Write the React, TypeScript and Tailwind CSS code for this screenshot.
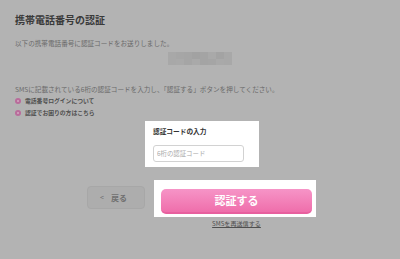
import React from 'react';

/**
 * Phone-number verification step, shown under a tutorial overlay:
 * the page is dimmed and only the code input and the submit button are lit.
 */
const MOSAIC = [
  ['#a8a8a8', '#a8a8a8'],
  ['#a6a6a6', '#a9a9a9'],
  ['#a5a5a5', '#a5a5a5'],
  ['#a2a2a2', '#a9a9a9'],
  ['#a4a4a4', '#a4a4a4'],
  ['#a9a9a9', '#a5a5a5'],
  ['#a3a3a3', '#a9a9a9'],
  ['#a8a8a8', '#a8a8a8'],
];

const HELP_LINKS = ['電話番号ログインについて', '認証でお困りの方はこちら'];

function Bullet() {
  return (
    <span className="w-[6px] h-[6px] rounded-full bg-[#b96c9b] flex items-center justify-center flex-shrink-0">
      <span className="w-[2px] h-[2px] rounded-full bg-[#d3a9c2]" />
    </span>
  );
}

export default function App() {
  return (
    <div
      className="w-[400px] h-[259px] bg-[#b3b3b3] overflow-hidden px-[15px] flex flex-col"
      style={{ fontFamily: '"Noto Sans CJK JP", "Noto Sans", sans-serif' }}
    >
      <h1 className="text-[10px] leading-[14px] font-bold text-[#3a3a3a] mt-[13px]">携帯電話番号の認証</h1>
      <p className="text-[6.6px] leading-[10px] text-[#6a6a6a] mt-[11px]">以下の携帯電話番号に認証コードをお送りしました。</p>

      {/* masked phone number */}
      <div className="flex justify-center mt-[4px]">
        <div className="flex">
          {MOSAIC.map(([top, bottom], i) => (
            <div key={i} className="w-[8px] flex flex-col">
              <div className="h-[7px]" style={{ background: top }} />
              <div className="h-[6px]" style={{ background: bottom }} />
            </div>
          ))}
        </div>
      </div>

      <p className="text-[6.6px] leading-[10px] text-[#6a6a6a] mt-[19px]">
        SMSに記載されている6桁の認証コードを入力し、「認証する」ボタンを押してください。
      </p>
      <ul className="mt-[2px] flex flex-col gap-[2px]">
        {HELP_LINKS.map((label) => (
          <li key={label} className="flex items-center gap-[4px] h-[10px]">
            <Bullet />
            <span className="text-[5.8px] font-bold text-[#4f4f4f]">{label}</span>
          </li>
        ))}
      </ul>

      {/* highlighted: code input */}
      <div className="ml-[130px] w-[114px] h-[46px] bg-white mt-[3px] px-[8px] pt-[5px]">
        <p className="text-[6.7px] leading-[11px] font-bold text-[#333]">認証コードの入力</p>
        <input
          className="mt-[6px] w-[91px] h-[17px] border border-[#d2d2d2] rounded-[3px] px-[3px] text-[6.4px] text-[#333] placeholder:text-[#a9a9a9] outline-none"
          placeholder="6桁の認証コード"
        />
      </div>

      <div className="flex items-start mt-[13px] ml-[72px]">
        <button className="mt-[6px] w-[58px] h-[23px] rounded-[4px] bg-[#adadad] border border-[#a7a7a7] flex items-center pl-[12px] gap-[7px] text-[#707070]">
          <span className="text-[7px] leading-none">&lt;</span>
          <span className="text-[8px] font-bold leading-none">戻る</span>
        </button>

        {/* highlighted: submit */}
        <div className="ml-[9px] flex flex-col items-center">
          <div className="w-[162px] h-[37px] bg-white pl-[7px] pr-[4px] pt-[6px]">
            <button className="w-[151px] h-[25px] rounded-[5px] bg-gradient-to-b from-[#f694c7] to-[#ef6eab] border-b-2 border-[#e8609f] text-white text-[11px] font-bold leading-none">
              認証する
            </button>
          </div>
          <a className="mt-[2px] pl-[3px] text-[6.1px] leading-[10px] text-[#4f4f4f] underline">SMSを再送信する</a>
        </div>
      </div>
    </div>
  );
}
